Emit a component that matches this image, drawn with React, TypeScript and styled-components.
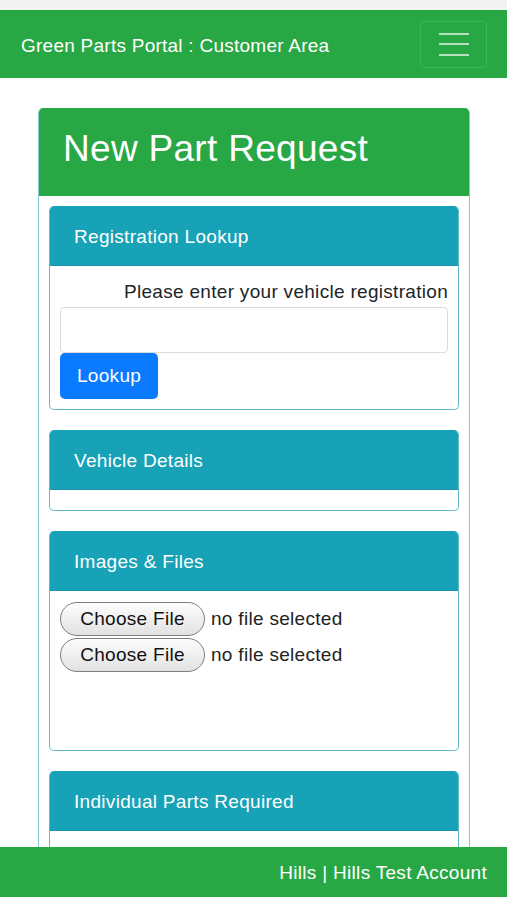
import styled, { createGlobalStyle } from "styled-components";

const GlobalStyle = createGlobalStyle`
  html, body {
    margin: 0;
    padding: 0;
    background: #ffffff;
    font-family: "Liberation Sans", Arial, sans-serif;
    letter-spacing: 0.3px;
  }
  * {
    box-sizing: border-box;
  }
`;

const Page = styled.div`
  position: relative;
`;

const TopStrip = styled.div`
  height: 10px;
  background: #f3f3f3;
`;

const Navbar = styled.nav`
  height: 68px;
  background: #28a745;
  display: flex;
  align-items: center;
  justify-content: space-between;
  padding: 0 20px 0 21px;
`;

const Brand = styled.div`
  color: #ffffff;
  font-size: 19px;
  letter-spacing: 0.25px;
  padding-top: 3px;
`;

const Toggler = styled.button`
  width: 67px;
  height: 47px;
  background: transparent;
  border: 1px solid rgba(255, 255, 255, 0.12);
  border-radius: 5px;
  display: flex;
  flex-direction: column;
  align-items: center;
  justify-content: center;
  gap: 8.5px;
  padding: 0;
`;

const TogglerLine = styled.span`
  display: block;
  width: 30px;
  height: 2px;
  background: rgba(255, 255, 255, 0.65);
`;

const Container = styled.main`
  padding: 30px 37px 0 38px;
`;

const OuterCard = styled.section`
  border: 1px solid #86c8d3;
  border-top: none;
  border-radius: 5px;
  overflow: hidden;
`;

const OuterHeader = styled.header`
  height: 88px;
  background: #28a745;
  display: flex;
  align-items: center;
  padding: 0 25px 6px;
  margin: 0 -1px;
`;

const PageTitle = styled.h1`
  margin: 0;
  color: #ffffff;
  font-size: 37px;
  font-weight: 400;
  letter-spacing: 0.3px;
`;

const OuterBody = styled.div`
  padding: 10px 10px 0 10px;
  display: flex;
  flex-direction: column;
  gap: 20px;
`;

const Card = styled.div`
  border: 1px solid #62b9c8;
  border-top: none;
  border-radius: 5px;
  overflow: hidden;
  background: #ffffff;
`;

const CardHeader = styled.div`
  height: 60px;
  background: #17a2b8;
  color: #ffffff;
  font-size: 19px;
  display: flex;
  align-items: center;
  padding: 3px 25px 0;
  margin: 0 -1px;
  border-bottom: 1px solid #1a93a6;
`;

const CardBody = styled.div<{ $minHeight?: number }>`
  padding: 10px;
  min-height: ${(p) => p.$minHeight ?? 0}px;
`;

const Label = styled.div`
  text-align: right;
  font-size: 19px;
  line-height: 22px;
  color: #212529;
  padding: 5px 0 4px;
`;

const TextInput = styled.input`
  display: block;
  width: 100%;
  height: 46px;
  border: 1px solid #dcdcdc;
  border-radius: 4px;
  font-size: 19px;
  padding: 0 12px;
`;

const PrimaryButton = styled.button`
  display: block;
  height: 46px;
  padding: 0 17px;
  background: #0a7bff;
  color: #ffffff;
  border: none;
  border-radius: 5px;
  font-size: 19px;
  font-family: inherit;
  letter-spacing: 0.3px;
`;

const FileRow = styled.div`
  display: flex;
  align-items: center;
  gap: 6px;
  height: 35px;
  margin-bottom: 1px;
`;

const FileButton = styled.span`
  display: inline-flex;
  align-items: center;
  justify-content: center;
  width: 145px;
  height: 34px;
  border: 1px solid #7e7e7e;
  border-radius: 17px;
  background: linear-gradient(#fdfdfd, #e2e2e2);
  color: #111111;
  font-size: 19px;
`;

const FileStatus = styled.span`
  font-size: 19px;
  color: #222222;
`;

const Footer = styled.footer`
  position: fixed;
  left: 0;
  right: 0;
  bottom: 3px;
  height: 50px;
  background: #28a745;
  display: flex;
  align-items: center;
  justify-content: flex-end;
  padding: 2px 20px 0;
  color: #ffffff;
  font-size: 19px;
`;

function FileInput() {
  return (
    <FileRow>
      <FileButton>Choose File</FileButton>
      <FileStatus>no file selected</FileStatus>
    </FileRow>
  );
}

export default function App() {
  return (
    <Page>
      <GlobalStyle />
      <TopStrip />
      <Navbar>
        <Brand>Green Parts Portal : Customer Area</Brand>
        <Toggler aria-label="Toggle navigation">
          <TogglerLine />
          <TogglerLine />
          <TogglerLine />
        </Toggler>
      </Navbar>
      <Container>
        <OuterCard>
          <OuterHeader>
            <PageTitle>New Part Request</PageTitle>
          </OuterHeader>
          <OuterBody>
            <Card>
              <CardHeader>Registration Lookup</CardHeader>
              <CardBody>
                <Label>Please enter your vehicle registration</Label>
                <TextInput type="text" />
                <PrimaryButton>Lookup</PrimaryButton>
              </CardBody>
            </Card>
            <Card>
              <CardHeader>Vehicle Details</CardHeader>
              <CardBody $minHeight={20} />
            </Card>
            <Card>
              <CardHeader>Images &amp; Files</CardHeader>
              <CardBody $minHeight={159}>
                <FileInput />
                <FileInput />
              </CardBody>
            </Card>
            <Card>
              <CardHeader>Individual Parts Required</CardHeader>
              <CardBody $minHeight={40} />
            </Card>
          </OuterBody>
        </OuterCard>
      </Container>
      <Footer>Hills | Hills Test Account</Footer>
    </Page>
  );
}
